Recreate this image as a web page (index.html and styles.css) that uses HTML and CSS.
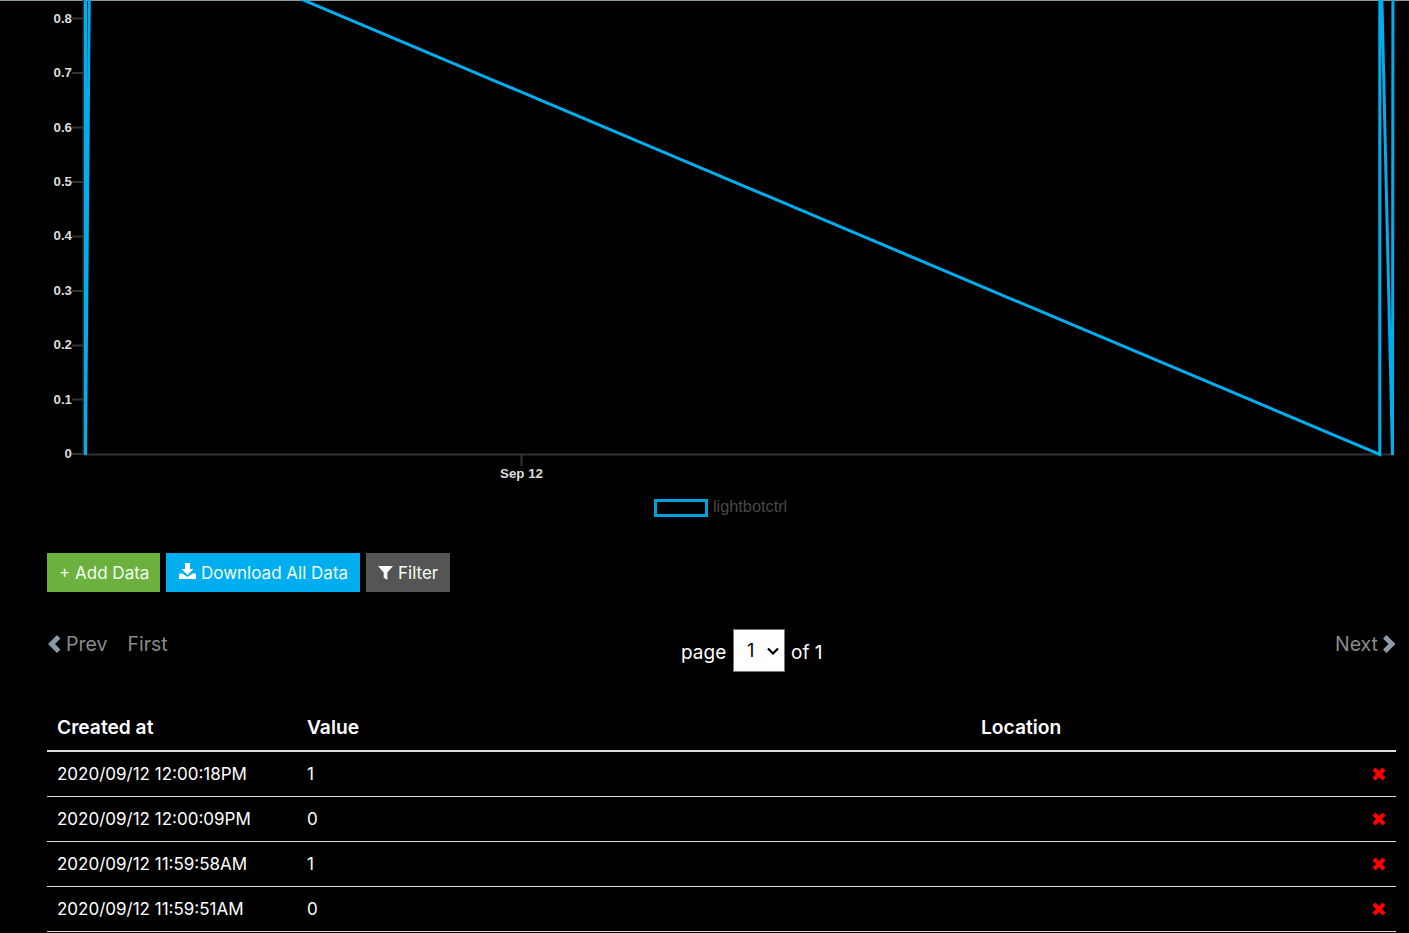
FILE: index.html
```html
<!DOCTYPE html>
<html lang="en">
<head>
<meta charset="utf-8">
<title>lightbotctrl</title>
<link rel="stylesheet" href="styles.css">
</head>
<body>
<div class="page">
  <svg class="chart" width="1409" height="533" viewBox="0 0 1409 533">
    <g class="axis">
      <path d="M83.500 0V454.500H1394"/>
      <path d="M72 18.500H83M72 73H83M72 127.500H83M72 182H83M72 236.500H83M72 291H83M72 345.500H83M72 399.500H83M72 454H83M521.500 454V466"/>
    </g>
    <g class="ticks">
      <text x="72" y="23">0.8</text>
      <text x="72" y="77">0.7</text>
      <text x="72" y="132">0.6</text>
      <text x="72" y="186">0.5</text>
      <text x="72" y="240">0.4</text>
      <text x="72" y="295">0.3</text>
      <text x="72" y="349">0.2</text>
      <text x="72" y="403.500">0.1</text>
      <text x="72" y="458">0</text>
      <text class="xtick" x="521.500" y="478">Sep 12</text>
    </g>
    <path class="series" d="M85.500 455V-90L85.500 455L90 -90L1379.800 454.500V-90L1392.500 455L1393 -90"/>
    <rect class="swatch" x="655.500" y="500.500" width="51" height="15"/>
    <text class="legend" x="713" y="512">lightbotctrl</text>
  </svg>

  <div class="actions">
    <a class="btn btn-green">+ Add Data</a>
    <a class="btn btn-blue">
      <svg class="ico-dl" width="17" height="16" viewBox="0 0 17 16"><path d="M6 0h5v6h3.500L8.500 12 2.500 6H6z"/><path d="M0 10.500h3.500L8.500 14l5-3.500H17V16H0z"/></svg>
      Download All Data
    </a>
    <a class="btn btn-grey">
      <svg class="ico-filter" width="15" height="14" viewBox="0 0 14 14" preserveAspectRatio="none"><path d="M0 0h14L8.700 6.500V14L5.300 11.500V6.500z"/></svg>
      Filter
    </a>
  </div>

  <div class="pager">
    <div class="pager-left">
      <span class="plink"><svg class="chev" width="14" height="18" viewBox="0 0 14 18"><path d="M10 0l3.500 3.500L8 9l5.500 5.500L10 18 1 9z"/></svg>Prev</span>
      <span class="plink">First</span>
    </div>
    <div class="pager-mid">
      <span class="page-label">page</span>
      <span class="select-wrap">
        <select class="page-select"><option>1</option></select>
        <svg class="select-arrow" width="12" height="8" viewBox="0 0 12 8"><path d="M1 1.500l5 5 5-5"/></svg>
      </span>
      <span>of 1</span>
    </div>
    <div class="pager-right">
      <span class="plink">Next<svg class="chev" width="13" height="18" viewBox="0 0 13 18"><path d="M3.500 0L0 3.500 5.500 9 0 14.500 3.500 18l9-9z"/></svg></span>
    </div>
  </div>

  <table class="data">
    <thead>
      <tr><th class="c1">Created at</th><th class="c2">Value</th><th>Location</th><th class="c4"></th></tr>
    </thead>
    <tbody>
      <tr><td>2020/09/12 12:00:18PM</td><td>1</td><td></td><td class="c4"><svg class="x" width="14" height="14" viewBox="0 0 14 14"><path d="M3.500 .5L7 4l3.500-3.500 3 3L10 7l3.500 3.500-3 3L7 10l-3.500 3.500-3-3L4 7 .5 3.500z"/></svg></td></tr>
      <tr><td>2020/09/12 12:00:09PM</td><td>0</td><td></td><td class="c4"><svg class="x" width="14" height="14" viewBox="0 0 14 14"><path d="M3.500 .5L7 4l3.500-3.500 3 3L10 7l3.500 3.500-3 3L7 10l-3.500 3.500-3-3L4 7 .5 3.500z"/></svg></td></tr>
      <tr><td>2020/09/12 11:59:58AM</td><td>1</td><td></td><td class="c4"><svg class="x" width="14" height="14" viewBox="0 0 14 14"><path d="M3.500 .5L7 4l3.500-3.500 3 3L10 7l3.500 3.500-3 3L7 10l-3.500 3.500-3-3L4 7 .5 3.500z"/></svg></td></tr>
      <tr><td>2020/09/12 11:59:51AM</td><td>0</td><td></td><td class="c4"><svg class="x" width="14" height="14" viewBox="0 0 14 14"><path d="M3.500 .5L7 4l3.500-3.500 3 3L10 7l3.500 3.500-3 3L7 10l-3.500 3.500-3-3L4 7 .5 3.500z"/></svg></td></tr>
    </tbody>
  </table>
</div>
</body>
</html>
```
FILE: styles.css
```css
* { box-sizing: border-box; }
html, body { margin: 0; padding: 0; background: #000; height: 933px; overflow: hidden; }
body { font-family: Inter, Lato, sans-serif; color: #fff; font-size: 17px; }
.page { border-top: 1px solid #8a9a9a; }
.chart { display: block; margin-top: -1px; }
.axis path { fill: none; stroke: #333; stroke-width: 2; }
.ticks text { font-family: "Liberation Sans", Arial, sans-serif; font-size: 13.300px; font-weight: 700; fill: #ddd; text-anchor: end; }
.ticks .xtick { text-anchor: middle; font-size: 13.300px; }
.series { fill: none; stroke: #00aeef; stroke-width: 3; stroke-linejoin: miter; stroke-miterlimit: 4; }
.swatch { fill: none; stroke: #00a0dc; stroke-width: 3; }
.legend { font-family: "Liberation Sans", Arial, sans-serif; font-size: 16.300px; fill: #484848; }
.actions { display: flex; gap: 6px; margin: 20px 0 0 47px; }
.btn { height: 39px; display: flex; align-items: center; padding: 0 12px; color: #f2fff2; font-size: 17px; white-space: nowrap; }
.btn-green { background: #6cb03e; width: 113px; }
.btn-blue { background: #00aeef; padding: 0 13px; width: 194px; }
.btn-grey { background: #555; padding: 0 12px; width: 84px; }
.ico-dl, .ico-filter { fill: #fff; margin-right: 5px; flex: none; }
.ico-dl { margin-top: -3px; }
.pager { display: flex; margin: 37px 13px 0 47px; height: 60px; }
.pager-left, .pager-right { display: flex; gap: 20px; height: 29px; align-items: center; font-size: 19.500px; }
.pager-left { width: 634px; }
.pager-right { margin-left: auto; }
.plink { display: flex; align-items: center; gap: 5px; color: #8a8a8a; }
.chev { fill: #8a9aa6; }
.pager-mid { display: flex; align-items: center; gap: 6px; height: 44px; padding-top: 2px; font-size: 19px; }
.page-label { min-width: 46px; }
.select-wrap { position: relative; display: block; height: 43px; align-self: flex-start; margin-top: -2px; }
.page-select { appearance: none; display: block; width: 52px; height: 43px; background: #fff; border: 1px solid #777; border-radius: 0; font: 18px Inter, sans-serif; color: #000; padding-left: 13px; }
.select-arrow { position: absolute; right: 6px; top: 18px; fill: none; stroke: #000; stroke-width: 2.200; }
.data { border-collapse: collapse; width: 1349px; margin: 17px 0 0 47px; table-layout: fixed; }
.data th { text-align: left; font-weight: 600; font-size: 19.200px; height: 45px; padding: 0 10px 2px; border-bottom: 2px solid #ddd; }
.data td { height: 45px; padding: 0 10px; font-size: 17px; border-bottom: 1px solid #ddd; }
.c1 { width: 250px; }
.c2 { width: 674px; }
.c4 { width: 50px; text-align: right; }
.x { fill: #f00; display: block; margin-left: auto; }
```
